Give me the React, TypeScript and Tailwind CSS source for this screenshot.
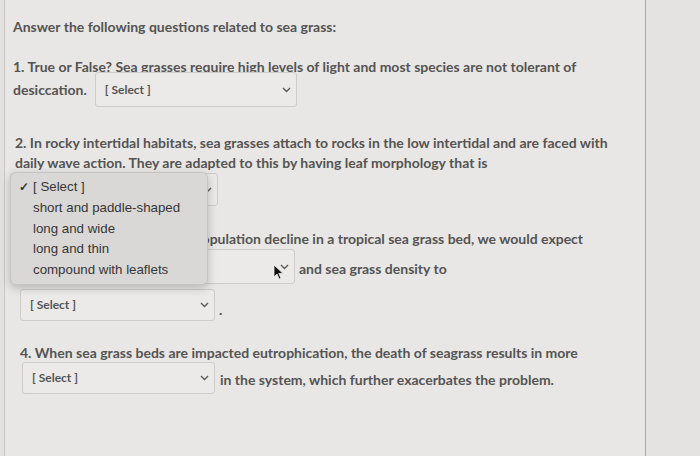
import React from "react";

const textCls =
  "text-[14px] leading-[20px] font-bold text-[#555453] font-['Lato',_'Liberation_Sans',_sans-serif]";

function Chevron() {
  return (
    <svg width="9" height="6" viewBox="0 0 9 6" className="shrink-0">
      <path d="M1 1l3.5 3.5L8 1" fill="none" stroke="#5a5a5a" strokeWidth="1.4" />
    </svg>
  );
}

function SelectBox({ cls, label = true }: { cls: string; label?: boolean }) {
  return (
    <div
      className={`flex items-center justify-between rounded-[3px] border border-[#cfcdcb] bg-[#ebeae8] pl-[9px] pr-[5px] ${cls}`}
    >
      <span className="text-[12px] font-bold text-[#555] font-['Lato',_sans-serif]">
        {label ? "[ Select ]" : ""}
      </span>
      <Chevron />
    </div>
  );
}

const OPTIONS = ["short and paddle-shaped", "long and wide", "long and thin", "compound with leaflets"];

export default function App() {
  return (
    <div className="relative w-[700px] h-[456px] overflow-hidden bg-[#e8e7e5] flex">
      <div className="w-[5px] border-r border-[#c9c8c6] bg-[#e2e1df]" />
      <div className={`relative w-[641px] border-r border-[#a9a8a6] pl-[8px] ${textCls}`}>
        <p className="mt-[17px]">Answer the following questions related to sea grass:</p>

        <p className="mt-[20px]">
          1. True or False? Sea grasses require high levels of light and most species are not tolerant of
        </p>
        <div className="flex items-center h-[35px] mt-[-5px]">
          <span>desiccation.</span>
          <SelectBox cls="ml-[8px] w-[202px] h-[35px]" />
        </div>

        <p className="mt-[26px] ml-[2px]">
          2. In rocky intertidal habitats, sea grasses attach to rocks in the low intertidal and are faced with
        </p>
        <p className="ml-[2px] leading-[19px]">
          daily wave action. They are adapted to this by having leaf morphology that is
        </p>
        <SelectBox cls="mt-[1px] ml-[-3px] w-[208px] h-[33px]" label={false} />

        <p className="mt-[23px] ml-[6px] whitespace-nowrap">
          3. If there were a sea urchin population decline in a tropical sea grass bed, we would expect
        </p>
        <div className="flex items-center h-[35px] mt-[0px]">
          <SelectBox cls="ml-[2px] w-[280px] h-[35px]" label={false} />
          <span className="ml-[4px] mt-[4px]">and sea grass density to</span>
        </div>
        <div className="flex items-end h-[32px] mt-[5px]">
          <SelectBox cls="ml-[7px] w-[195px] h-[32px]" />
          <span className="ml-[4px] mb-[1px]">.</span>
        </div>

        <p className="mt-[22px] ml-[7px]">
          4. When sea grass beds are impacted eutrophication, the death of seagrass results in more
        </p>
        <div className="flex items-center h-[32px] mt-[-1px]">
          <SelectBox cls="ml-[9px] w-[193px] h-[32px]" />
          <span className="ml-[5px] mt-[3px]">in the system, which further exacerbates the problem.</span>
        </div>

        {/* open dropdown menu */}
        <div className="absolute left-[5px] top-[172px] w-[198px] h-[113px] rounded-[6px] border border-[#c6c4c2] bg-[#dad8d6] shadow-[0_3px_10px_rgba(0,0,0,0.22)] pt-[4px] font-['Liberation_Sans',_sans-serif] font-normal text-[13.3px] leading-[20.8px] text-[#363636]">
          <div className="flex items-center">
            <span className="w-[22px] pl-[8px] text-[12px] font-bold">✓</span>
            <span>[ Select ]</span>
          </div>
          {OPTIONS.map((o) => (
            <div key={o} className="pl-[22px]">
              {o}
            </div>
          ))}
        </div>

        {/* mouse pointer */}
        <svg
          className="absolute left-[268px] top-[264px]"
          width="11"
          height="16"
          viewBox="0 0 11 16"
        >
          <path d="M1 1v12l3-3 2.2 5 1.8-.8-2.2-4.8H10z" fill="#111" stroke="#eee" strokeWidth="0.8" />
        </svg>
      </div>
      <div className="flex-1 bg-[#e5e3e1]" />
    </div>
  );
}
